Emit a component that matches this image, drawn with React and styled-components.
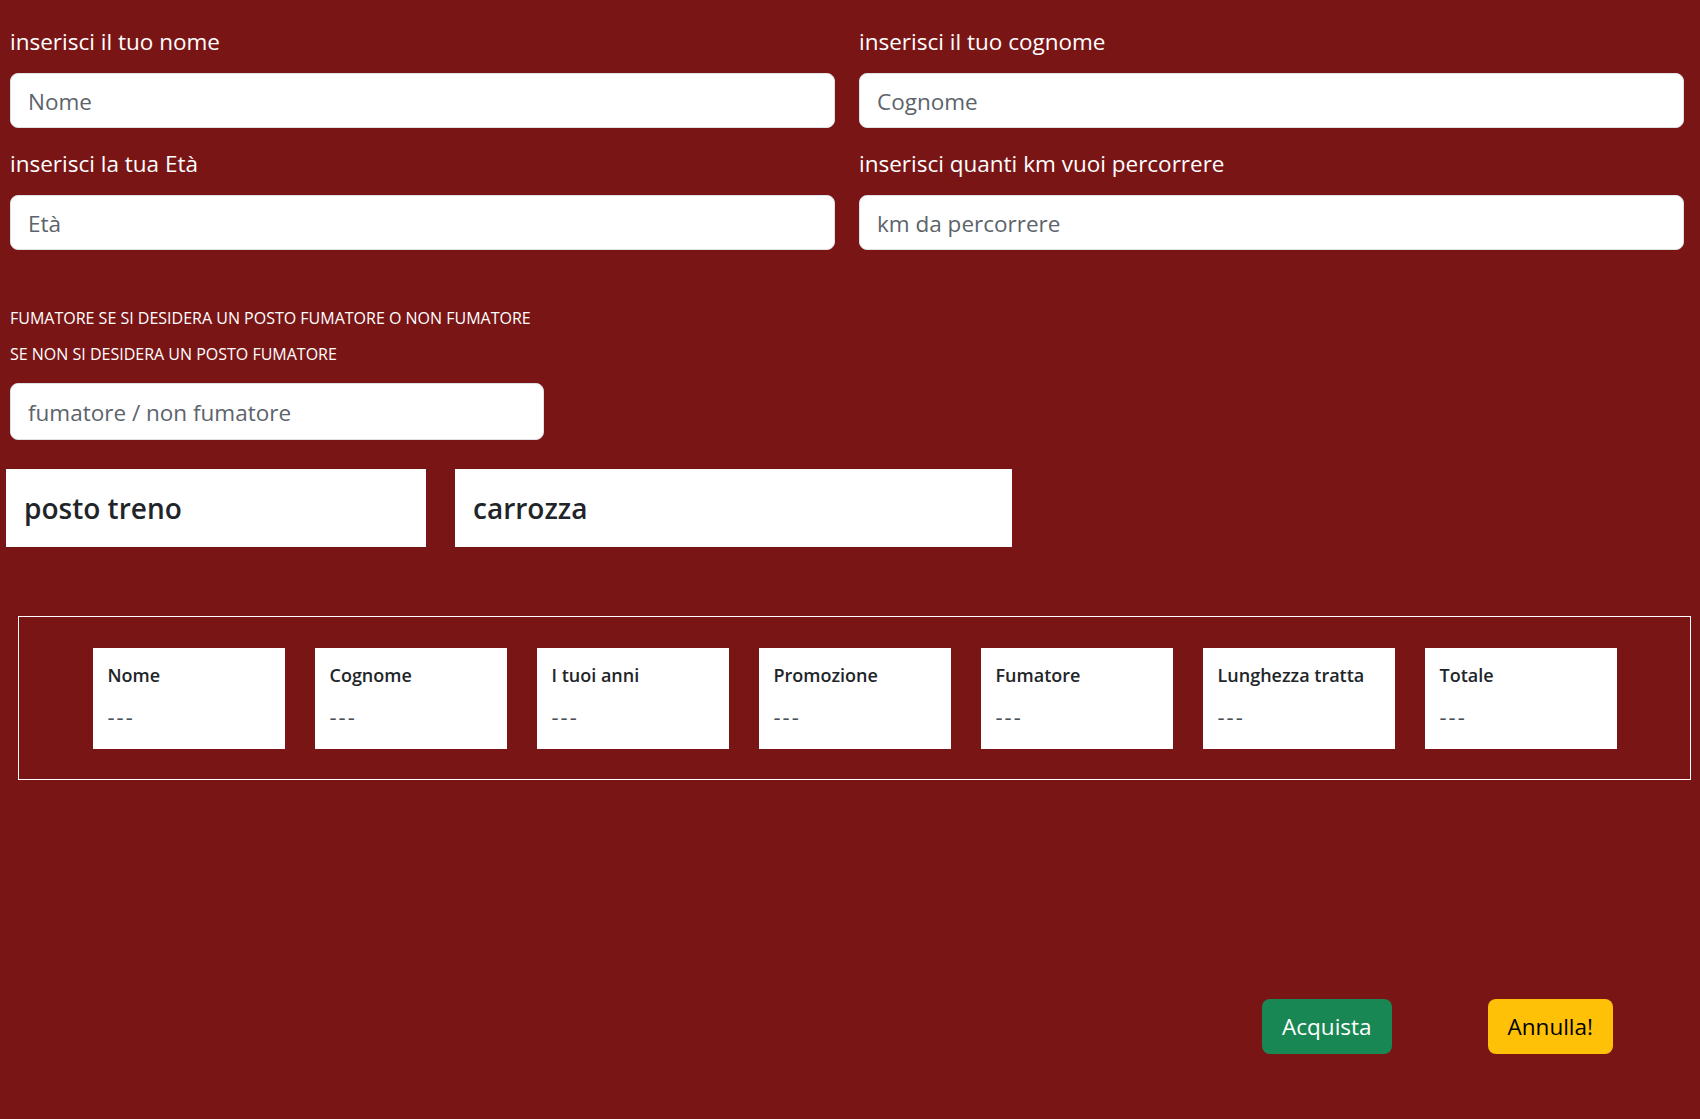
import React from "react";
import styled, { createGlobalStyle } from "styled-components";

const GlobalStyle = createGlobalStyle`
  html, body {
    margin: 0;
    padding: 0;
    background: #7a1516;
    min-height: 100%;
  }

  body {
    font-family: "Open Sans", "Noto Sans", sans-serif;
    color: #fff;
  }

  * {
    box-sizing: border-box;
  }
`;

const Page = styled.main`
  display: flex;
  flex-direction: column;

  min-height: 1119px;
  padding: 25px 16px 40px 10px;
`;

const FormGrid = styled.div`
  display: grid;
  grid-template-columns: repeat(2, 1fr);
  column-gap: 24px;
  row-gap: 19px;
`;

const Field = styled.div`
  display: flex;
  flex-direction: column;
`;

const Label = styled.label`
  font-size: 22.5px;
  line-height: 33px;
  margin-bottom: 15px;
  color: #fff;
`;

const Input = styled.input`
  width: ${(p) => p.$width || "100%"};
  height: ${(p) => p.$height || "55px"};
  padding: 2px 17px 0;

  font-family: "Open Sans", "Noto Sans", sans-serif;
  font-size: 22.5px;
  color: #212529;

  background: #fff;
  border: 1px solid #dee2e6;
  border-radius: 8px;
  outline: none;

  &::placeholder {
    color: #5c636a;
  }
`;

const SmokeSection = styled.div`
  display: flex;
  flex-direction: column;
  margin-top: 56px;
`;

const Hint = styled.p`
  margin: 0 0 ${(p) => p.$gap || "0"};
  font-size: 16px;
  line-height: 24px;
  text-transform: uppercase;
  color: #fff;
`;

const SeatRow = styled.div`
  display: flex;
  gap: 29px;
  margin: 29px 0 0 -4px;
`;

const SeatBox = styled.div`
  width: ${(p) => p.$width};
  height: 78px;
  padding: 0 18px;

  display: flex;
  align-items: center;

  background: #fff;
  color: #212529;
  font-size: 28px;
  font-weight: 600;
`;

const Summary = styled.section`
  display: flex;
  justify-content: center;
  gap: 30px;

  margin: 69px -7px 0 8px;
  padding: 31px 0 30px;
  border: 1px solid #fff;
`;

const Card = styled.div`
  width: 192px;
  height: 101px;
  padding: 14px 15px;

  display: flex;
  flex-direction: column;

  background: #fff;
  color: #212529;
`;

const CardTitle = styled.h5`
  margin: 0 0 16px;
  font-size: 18px;
  line-height: 26px;
  font-weight: 600;
`;

const CardValue = styled.span`
  font-size: 22px;
  line-height: 24px;
  letter-spacing: 2px;
  color: #495057;
`;

const Actions = styled.div`
  display: flex;
  justify-content: flex-end;
  gap: 96px;

  margin-top: 219px;
  padding-right: 71px;
`;

const Button = styled.button`
  height: 55px;
  padding: 0 20px;

  font-family: "Open Sans", "Noto Sans", sans-serif;
  font-size: 22.5px;

  background: ${(p) => (p.$variant === "warning" ? "#ffc107" : "#198754")};
  color: ${(p) => (p.$variant === "warning" ? "#000" : "#fff")};
  border: none;
  border-radius: 8px;
  cursor: pointer;
`;

const fields = [
  { label: "inserisci il tuo nome", placeholder: "Nome" },
  { label: "inserisci il tuo cognome", placeholder: "Cognome" },
  { label: "inserisci la tua Età", placeholder: "Età" },
  { label: "inserisci quanti km vuoi percorrere", placeholder: "km da percorrere" },
];

const cards = [
  "Nome",
  "Cognome",
  "I tuoi anni",
  "Promozione",
  "Fumatore",
  "Lunghezza tratta",
  "Totale",
];

const App = () => {
  return (
    <>
      <GlobalStyle />
      <Page>
        <FormGrid>
          {fields.map((f) => (
            <Field key={f.placeholder}>
              <Label>{f.label}</Label>
              <Input type="text" placeholder={f.placeholder} />
            </Field>
          ))}
        </FormGrid>

        <SmokeSection>
          <Hint $gap="12px">
            fumatore se si desidera un posto fumatore o non fumatore
          </Hint>
          <Hint $gap="17px">se non si desidera un posto fumatore</Hint>
          <Input
            type="text"
            placeholder="fumatore / non fumatore"
            $width="534px"
            $height="57px"
          />
        </SmokeSection>

        <SeatRow>
          <SeatBox $width="420px">posto treno</SeatBox>
          <SeatBox $width="557px">carrozza</SeatBox>
        </SeatRow>

        <Summary>
          {cards.map((c) => (
            <Card key={c}>
              <CardTitle>{c}</CardTitle>
              <CardValue>---</CardValue>
            </Card>
          ))}
        </Summary>

        <Actions>
          <Button>Acquista</Button>
          <Button $variant="warning">Annulla!</Button>
        </Actions>
      </Page>
    </>
  );
};

export default App;
